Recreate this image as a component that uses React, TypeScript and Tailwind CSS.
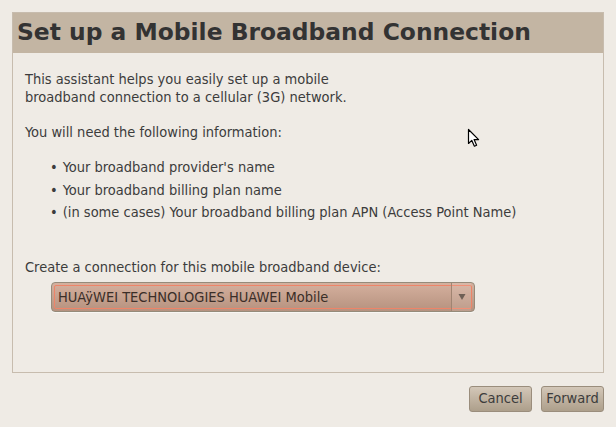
const body = "font-['DejaVu_Sans_Condensed','DejaVu_Sans',sans-serif]";

const bullets = [
  "Your broadband provider's name",
  'Your broadband billing plan name',
  '(in some cases) Your broadband billing plan APN (Access Point Name)',
];

function Pointer() {
  return (
    <svg className="absolute left-[467px] top-[128px]" width="14" height="20" viewBox="0 0 14 20">
      <path
        d="M1.5 1.5 L1.5 15.5 L4.8 12.4 L7.4 18.2 L9.6 17.2 L7.1 11.6 L11.6 11.6 Z"
        fill="#fff"
        stroke="#000"
        strokeWidth="1.2"
        strokeLinejoin="round"
      />
    </svg>
  );
}

export default function App() {
  return (
    <div className={`relative w-[616px] h-[427px] bg-[#efebe5] text-[#3c3c3c] ${body} overflow-hidden`}>
      <div className="pt-[12px] px-[12px]">
        <div className="border border-[#c7bcae] h-[361px] flex flex-col">
          <div className="h-[40px] bg-[#c3b5a3] flex items-center pl-[4px]">
            <h1 className="font-['DejaVu_Sans',sans-serif] font-bold text-[23.4px] text-[#333]">
              Set up a Mobile Broadband Connection
            </h1>
          </div>
          <div className="px-[12px] pt-[17px] text-[14.5px] leading-[18px]">
            <p>
              This assistant helps you easily set up a mobile
              <br />
              broadband connection to a cellular (3G) network.
            </p>
            <p className="mt-[17px]">You will need the following information:</p>
            <ul className="mt-[17px] pl-[25px] flex flex-col gap-[4.5px]">
              {bullets.map((b) => (
                <li key={b} className="flex gap-[5px]">
                  <span>•</span>
                  <span>{b}</span>
                </li>
              ))}
            </ul>
            <p className="mt-[37px]">Create a connection for this mobile broadband device:</p>
            <div className="mt-[6px] ml-[26px] w-[424px] h-[30px] rounded-[4px] border border-[#958b7a] bg-gradient-to-b from-[#d5b09e] to-[#b6927f] p-[2px] shadow-[0_1px_0_#fff8]">
              <div className="h-full border border-[#ee8468] rounded-[2px] flex items-center">
                <span className="flex-1 pl-[3px] text-[#3a2e28]">HUAÿWEI TECHNOLOGIES HUAWEI Mobile</span>
                <span className="w-[20px] h-[28px] -my-px border-l border-[#a08472] flex items-center justify-center bg-white/10">
                  <svg width="8" height="8" viewBox="0 0 8 8">
                    <path d="M0.5 1 L7.5 1 L4 7 Z" fill="#6e5f55" />
                  </svg>
                </span>
              </div>
            </div>
          </div>
        </div>
        <div className="flex justify-end gap-[9px] mt-[13px]">
          <button className="w-[63px] h-[26px] rounded-[3px] border border-[#9a8d7c] bg-gradient-to-b from-[#d3c7b8] to-[#ad9f8b] text-[14.5px] text-[#3c3c3c]">
            Cancel
          </button>
          <button className="w-[63px] h-[26px] rounded-[3px] border border-[#9a8d7c] bg-gradient-to-b from-[#d3c7b8] to-[#ad9f8b] text-[14.5px] text-[#3c3c3c]">
            Forward
          </button>
        </div>
      </div>
      <Pointer />
    </div>
  );
}
